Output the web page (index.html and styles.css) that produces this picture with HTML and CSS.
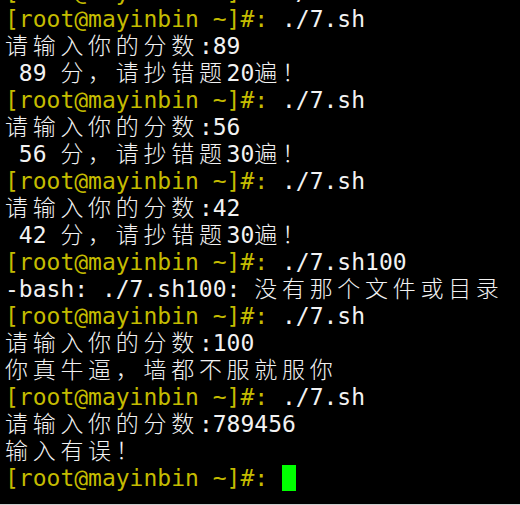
FILE: index.html
```html
<!DOCTYPE html>
<html lang="zh-CN">
<head>
    <meta charset="UTF-8">
    <title>7.sh</title>
    <link rel="stylesheet" href="styles.css">
</head>
<body>
<div class="terminal">
    <div class="screen">
        <div class="line"><span class="ps">[root@mayinbin ~]#:</span> ./7.sh</div>
        <div class="line"><span class="ps">[root@mayinbin ~]#:</span> ./7.sh</div>
        <div class="line"><span class="zh">请输入你的分数</span>:89</div>
        <div class="line"> 89 <span class="zh">分，请抄错题</span>20<span class="zh">遍！</span></div>
        <div class="line"><span class="ps">[root@mayinbin ~]#:</span> ./7.sh</div>
        <div class="line"><span class="zh">请输入你的分数</span>:56</div>
        <div class="line"> 56 <span class="zh">分，请抄错题</span>30<span class="zh">遍！</span></div>
        <div class="line"><span class="ps">[root@mayinbin ~]#:</span> ./7.sh</div>
        <div class="line"><span class="zh">请输入你的分数</span>:42</div>
        <div class="line"> 42 <span class="zh">分，请抄错题</span>30<span class="zh">遍！</span></div>
        <div class="line"><span class="ps">[root@mayinbin ~]#:</span> ./7.sh100</div>
        <div class="line">-bash: ./7.sh100: <span class="zh">没有那个文件或目录</span></div>
        <div class="line"><span class="ps">[root@mayinbin ~]#:</span> ./7.sh</div>
        <div class="line"><span class="zh">请输入你的分数</span>:100</div>
        <div class="line"><span class="zh">你真牛逼，墙都不服就服你</span></div>
        <div class="line"><span class="ps">[root@mayinbin ~]#:</span> ./7.sh</div>
        <div class="line"><span class="zh">请输入你的分数</span>:789456</div>
        <div class="line"><span class="zh">输入有误！</span></div>
        <div class="line"><span class="ps">[root@mayinbin ~]#:</span> <span class="cursor"></span></div>
    </div>
</div>
</body>
</html>
```

FILE: styles.css
```css
html, body {
    margin: 0;
    padding: 0;
    background-color: #000;
    height: 505px;
    overflow: hidden;
}
.terminal {
    height: 504px;
    border-bottom: 1px solid #cfcfcf;
    overflow: hidden;
}
.screen {
    margin-top: -21px;
    padding: 0 5px;
    font-family: "DejaVu Sans Mono", "Noto Sans CJK SC", monospace;
    font-size: 23px;
    color: #f2f2f2;
}
.line {
    height: 27px;
    line-height: 27px;
    white-space: pre;
}
/* prompt colour */
.ps {
    color: #c4bc00;
}
/* CJK glyphs take two cells in the terminal */
.zh {
    font-family: "Noto Sans CJK SC", sans-serif;
    font-weight: 300;
    line-height: 1;
    letter-spacing: 4.7px;
}
.cursor {
    display: inline-block;
    width: 14px;
    height: 26px;
    vertical-align: top;
    background-color: #00ff00;
}
```
